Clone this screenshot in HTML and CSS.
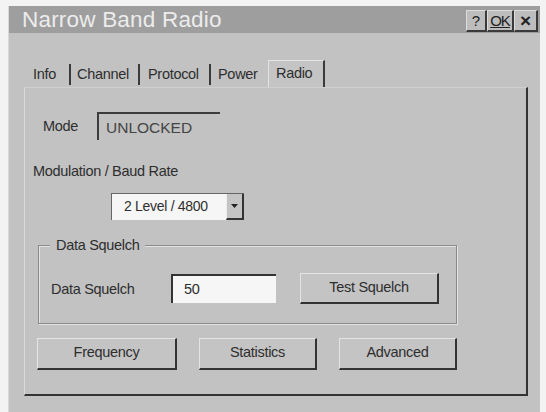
FILE: index.html
```html
<!DOCTYPE html>
<html>
<head>
<meta charset="utf-8">
<link rel="stylesheet" href="styles.css">
</head>
<body>
<div class="dialog">
  <div class="titlebar">
    <span class="title">Narrow Band Radio</span>
    <div class="tbtns">
      <span class="tbtn help">?</span>
      <span class="tbtn ok">OK</span>
      <span class="tbtn close">×</span>
    </div>
  </div>
  <div class="content">
    <div class="tabs">
      <span class="tab t-info">Info</span>
      <span class="tab t-channel">Channel</span>
      <span class="tab t-protocol">Protocol</span>
      <span class="tab t-power">Power</span>
      <span class="tab active">Radio</span>
    </div>
    <div class="panel">
      <div class="mode-row">
        <span class="lbl">Mode</span>
        <span class="mode-box">UNLOCKED</span>
      </div>
      <div class="mod-label">Modulation / Baud Rate</div>
      <div class="combo">
        <span class="combo-text">2 Level / 4800</span>
        <span class="combo-btn"><svg width="7" height="4" viewBox="0 0 7 4"><path d="M0 0H7L3.5 4Z" fill="#222"/></svg></span>
      </div>
      <div class="group">
        <span class="legend">Data Squelch</span>
        <div class="group-row">
          <span class="lbl">Data Squelch</span>
          <span class="input">50</span>
          <span class="btn test">Test Squelch</span>
        </div>
      </div>
      <div class="btn-row">
        <span class="btn wide">Frequency</span>
        <span class="btn">Statistics</span>
        <span class="btn">Advanced</span>
      </div>
    </div>
  </div>
</div>
</body>
</html>
```

FILE: styles.css
```css
html, body {
  margin: 0;
  padding: 0;
  background: #f3f3f3;
}
body {
  padding: 6px 6px 0 8px;
  font-family: "Liberation Sans", Arial, sans-serif;
  color: #2e2e2e;
}
.dialog {
  width: 532px;
  height: 406px;
  background: #c2c2c2;
  box-sizing: border-box;
  border-left: 1px solid #d8d8d8;
  display: flex;
  flex-direction: column;
}
.titlebar {
  height: 27px;
  background: #9e9e9e;
  display: flex;
  align-items: center;
  justify-content: space-between;
  padding-left: 13px;
  padding-right: 2px;
}
.title {
  font-size: 22.5px;
  color: #ececec;
  letter-spacing: 0.2px;
}
.tbtns {
  display: flex;
  align-self: flex-end;
  margin-bottom: 1px;
}
.tbtn {
  height: 19px;
  background: #bdbdbd;
  border-right: 2px solid #3a3a3a;
  border-bottom: 2px solid #3a3a3a;
  border-top: 1px solid #dcdcdc;
  border-left: 1px solid #dcdcdc;
  font-size: 15px;
  line-height: 19px;
  text-align: center;
  color: #222;
}
.help { width: 18px; }
.ok { width: 24px; text-decoration: underline; letter-spacing: -1px; }
.close { width: 21px; font-size: 19px; font-weight: bold; }

.content {
  padding: 28px 0 0 15px;
  display: flex;
  flex-direction: column;
}
.tabs {
  display: flex;
  align-items: flex-end;
  height: 26px;
  font-size: 14.5px;
  letter-spacing: -0.3px;
}
.tab {
  height: 21px;
  line-height: 20px;
  border-right: 2px solid #3a3a3a;
  box-sizing: border-box;
  margin-bottom: 2px;
}
.t-info { padding-left: 9px; width: 47px; }
.t-channel { padding-left: 6px; width: 69px; }
.t-protocol { padding-left: 8px; width: 71px; }
.t-power { padding-left: 7px; width: 57px; border-right: none; }
.active {
  height: 27px;
  line-height: 24px;
  margin-bottom: 0;
  padding-left: 7px;
  width: 57px;
  border-top: 1px solid #e4e4e4;
  border-left: 1px solid #e4e4e4;
  background: #c4c4c4;
}
.panel {
  width: 504px;
  height: 309px;
  box-sizing: border-box;
  border-left: 1px solid #dadada;
  border-top: 1px solid #cfcfcf;
  border-right: 2px solid #333;
  border-bottom: 2px solid #333;
  padding: 24px 0 0 8px;
  display: flex;
  flex-direction: column;
  font-size: 14.5px;
  letter-spacing: -0.3px;
}
.mode-row {
  display: flex;
  align-items: center;
  padding-left: 10px;
  height: 28px;
}
.mode-row .lbl { width: 54px; }
.mode-box {
  width: 123px;
  height: 28px;
  box-sizing: border-box;
  border-top: 2px solid #3c3c3c;
  border-left: 2px solid #3c3c3c;
  padding-left: 7px;
  line-height: 27px;
  font-size: 15.5px;
  color: #444;
  letter-spacing: 0;
}
.mod-label {
  margin-top: 23px;
  height: 18px;
}
.combo {
  margin: 12px 0 0 78px;
  width: 133px;
  height: 27px;
  box-sizing: border-box;
  background: #f6f6f6;
  border-top: 1px solid #666;
  border-left: 1px solid #666;
  display: flex;
}
.combo-text {
  flex: 1;
  padding-left: 12px;
  line-height: 25px;
  font-size: 14px;
}
.combo-btn {
  width: 15px;
  background: #c4c4c4;
  border-right: 2px solid #333;
  border-bottom: 2px solid #333;
  border-left: 1px solid #eee;
  display: flex;
  align-items: center;
  justify-content: center;
}
.group {
  position: relative;
  margin: 25px 0 0 5px;
  width: 419px;
  height: 79px;
  box-sizing: border-box;
  border: 1px solid #8a8a8a;
  box-shadow: 1px 1px 0 #e2e2e2 inset, 1px 1px 0 #e2e2e2;
  padding-top: 27px;
}
.legend {
  position: absolute;
  top: -10px;
  left: 11px;
  padding: 0 6px 0 6px;
  background: #c2c2c2;
  line-height: 18px;
}
.group-row {
  display: flex;
  align-items: center;
}
.group-row .lbl {
  margin-left: 12px;
  width: 120px;
}
.input {
  width: 105px;
  height: 29px;
  box-sizing: border-box;
  background: #f6f6f6;
  border-top: 2px solid #333;
  border-left: 2px solid #333;
  padding-left: 11px;
  line-height: 26px;
}
.btn {
  width: 118px;
  height: 32px;
  box-sizing: border-box;
  background: #c4c4c4;
  border-top: 1px solid #e4e4e4;
  border-left: 1px solid #e4e4e4;
  border-right: 2px solid #333;
  border-bottom: 2px solid #333;
  text-align: center;
  line-height: 27px;
}
.btn.test {
  margin-left: 24px;
  width: 139px;
  height: 31px;
}
.btn-row {
  display: flex;
  margin: 14px 0 0 4px;
  gap: 22px;
}
.btn.wide { width: 140px; }
```
